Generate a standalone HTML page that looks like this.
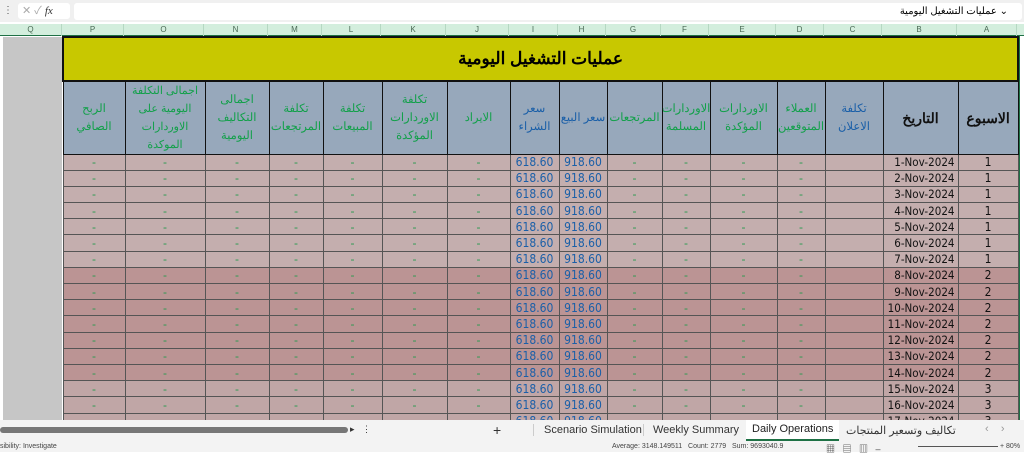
<!DOCTYPE html><html><head><meta charset="utf-8"><style>
*{margin:0;padding:0;box-sizing:border-box}
body{width:1024px;height:452px;overflow:hidden;background:#fff;font-family:"Liberation Sans","Noto Sans CJK SC",sans-serif;position:relative}
.a{position:absolute}
#fb{left:0;top:0;width:1024px;height:22px;background:#f0f0f0}
#ch{left:0;top:24px;width:1024px;height:12px;background:#d3eedd;border-bottom:1px solid #1e7145}
.cl{position:absolute;top:0;height:12px;font-size:8px;color:#4a6a55;text-align:center;line-height:12px;border-right:1px solid #b5d8c2}
#q{left:3px;top:37px;width:59px;height:383px;background:#c6c6c6}
table{position:absolute;left:62px;top:36px;width:955px;border-collapse:collapse;table-layout:fixed;direction:ltr}
td{border:1px solid #222;font-family:"Liberation Sans","Noto Sans CJK SC",sans-serif;overflow:hidden;white-space:nowrap;padding:0}
.t td{background:#c8c800;height:44px;font-size:17px;text-align:center;font-weight:bold;border:2px solid #111}
.h td{background:#97a8bb;height:73px;font-size:11.5px;text-align:center;color:#12a04a;white-space:normal;border:1.5px solid #111}
.h td div{height:71px;overflow:hidden;display:flex;align-items:center;justify-content:center;line-height:18px}
.h td.b{color:#1a5fa8}.h td.k{color:#111;font-size:14px;font-weight:bold}
.r td{height:16.2px;font-size:12px;line-height:14px;text-align:center;color:#2a9a50;border-color:#555}
.w1 td{background:#c4aeae}.w2 td{background:#bb9494}.w3 td{background:#c0a6a6}
.r td.n{color:#1a5fa8;font-family:"DejaVu Sans Condensed","Liberation Sans",sans-serif;font-size:12px}
.r td.d{color:#111;text-align:right;padding-right:3px;font-family:"DejaVu Sans Condensed","Liberation Sans",sans-serif;font-size:11.5px}
.r td.wk{color:#111;font-family:"DejaVu Sans Condensed",sans-serif;font-size:12px}
#tabs{left:0;top:420px;width:1024px;height:21px;background:#f3f3f3;font-size:11px;color:#333}
#st{left:0;top:441px;width:1024px;height:11px;background:#f3f3f3;font-size:7px;color:#444}
</style></head><body>
<div class="a" id="fb">
<div class="a" style="left:3px;top:5px;width:4px;height:12px;font-size:10px;color:#555">⋮</div>
<div class="a" style="left:18px;top:3px;width:52px;height:16px;background:#fff;border-radius:3px;font-size:11px;color:#aaa;padding-left:4px;line-height:16px">✕ ✓ <i style="color:#333;font-family:'Liberation Serif'">fx</i></div>
<div class="a" style="left:74px;top:3px;width:948px;height:17px;background:#fff;border-radius:3px;font-size:10px;direction:rtl;padding-right:14px;line-height:17px">⌄ عمليات التشغيل اليومية</div>
</div>
<div class="a" id="ch">
<div class="cl" style="left:0;width:62px">Q</div><div class="cl" style="left:62px;width:62px">P</div><div class="cl" style="left:124px;width:80px">O</div><div class="cl" style="left:204px;width:64px">N</div><div class="cl" style="left:268px;width:54px">M</div><div class="cl" style="left:322px;width:59px">L</div><div class="cl" style="left:381px;width:65px">K</div><div class="cl" style="left:446px;width:63px">J</div><div class="cl" style="left:509px;width:49px">I</div><div class="cl" style="left:558px;width:48px">H</div><div class="cl" style="left:606px;width:55px">G</div><div class="cl" style="left:661px;width:48px">F</div><div class="cl" style="left:709px;width:67px">E</div><div class="cl" style="left:776px;width:48px">D</div><div class="cl" style="left:824px;width:58px">C</div><div class="cl" style="left:882px;width:75px">B</div><div class="cl" style="left:957px;width:60px">A</div>
</div>
<div class="a" id="q"></div>
<table>
<colgroup><col style="width:62px"><col style="width:80px"><col style="width:64px"><col style="width:54px"><col style="width:59px"><col style="width:65px"><col style="width:63px"><col style="width:49px"><col style="width:48px"><col style="width:55px"><col style="width:48px"><col style="width:67px"><col style="width:48px"><col style="width:58px"><col style="width:75px"><col style="width:60px"></colgroup>
<tr class="t"><td colspan="16">عمليات التشغيل اليومية</td></tr>
<tr class="h"><td><div>الربح الصافي</div></td><td><div style="font-size:11px">اجمالى التكلفة اليومية على الاوردارات الموكدة</div></td><td><div>اجمالى التكاليف اليومية</div></td><td><div>تكلفة المرتجعات</div></td><td><div>تكلفة المبيعات</div></td><td><div>تكلفة الاوردارات المؤكدة</div></td><td><div>الايراد</div></td><td class="b"><div>سعر الشراء</div></td><td class="b"><div>سعر البيع</div></td><td><div>المرتجعات</div></td><td><div>الاوردارات المسلمة</div></td><td><div>الاوردارات المؤكدة</div></td><td><div>العملاء المتوقعين</div></td><td class="b"><div>تكلفة الاعلان</div></td><td class="k"><div>التاريخ</div></td><td class="k"><div>الاسبوع</div></td></tr>
<tr class="r w1"><td>-</td><td>-</td><td>-</td><td>-</td><td>-</td><td>-</td><td>-</td><td class="n">618.60</td><td class="n">918.60</td><td>-</td><td>-</td><td>-</td><td>-</td><td></td><td class="d">1-Nov-2024</td><td class="wk">1</td></tr>
<tr class="r w1"><td>-</td><td>-</td><td>-</td><td>-</td><td>-</td><td>-</td><td>-</td><td class="n">618.60</td><td class="n">918.60</td><td>-</td><td>-</td><td>-</td><td>-</td><td></td><td class="d">2-Nov-2024</td><td class="wk">1</td></tr>
<tr class="r w1"><td>-</td><td>-</td><td>-</td><td>-</td><td>-</td><td>-</td><td>-</td><td class="n">618.60</td><td class="n">918.60</td><td>-</td><td>-</td><td>-</td><td>-</td><td></td><td class="d">3-Nov-2024</td><td class="wk">1</td></tr>
<tr class="r w1"><td>-</td><td>-</td><td>-</td><td>-</td><td>-</td><td>-</td><td>-</td><td class="n">618.60</td><td class="n">918.60</td><td>-</td><td>-</td><td>-</td><td>-</td><td></td><td class="d">4-Nov-2024</td><td class="wk">1</td></tr>
<tr class="r w1"><td>-</td><td>-</td><td>-</td><td>-</td><td>-</td><td>-</td><td>-</td><td class="n">618.60</td><td class="n">918.60</td><td>-</td><td>-</td><td>-</td><td>-</td><td></td><td class="d">5-Nov-2024</td><td class="wk">1</td></tr>
<tr class="r w1"><td>-</td><td>-</td><td>-</td><td>-</td><td>-</td><td>-</td><td>-</td><td class="n">618.60</td><td class="n">918.60</td><td>-</td><td>-</td><td>-</td><td>-</td><td></td><td class="d">6-Nov-2024</td><td class="wk">1</td></tr>
<tr class="r w1"><td>-</td><td>-</td><td>-</td><td>-</td><td>-</td><td>-</td><td>-</td><td class="n">618.60</td><td class="n">918.60</td><td>-</td><td>-</td><td>-</td><td>-</td><td></td><td class="d">7-Nov-2024</td><td class="wk">1</td></tr>
<tr class="r w2"><td>-</td><td>-</td><td>-</td><td>-</td><td>-</td><td>-</td><td>-</td><td class="n">618.60</td><td class="n">918.60</td><td>-</td><td>-</td><td>-</td><td>-</td><td></td><td class="d">8-Nov-2024</td><td class="wk">2</td></tr>
<tr class="r w2"><td>-</td><td>-</td><td>-</td><td>-</td><td>-</td><td>-</td><td>-</td><td class="n">618.60</td><td class="n">918.60</td><td>-</td><td>-</td><td>-</td><td>-</td><td></td><td class="d">9-Nov-2024</td><td class="wk">2</td></tr>
<tr class="r w2"><td>-</td><td>-</td><td>-</td><td>-</td><td>-</td><td>-</td><td>-</td><td class="n">618.60</td><td class="n">918.60</td><td>-</td><td>-</td><td>-</td><td>-</td><td></td><td class="d">10-Nov-2024</td><td class="wk">2</td></tr>
<tr class="r w2"><td>-</td><td>-</td><td>-</td><td>-</td><td>-</td><td>-</td><td>-</td><td class="n">618.60</td><td class="n">918.60</td><td>-</td><td>-</td><td>-</td><td>-</td><td></td><td class="d">11-Nov-2024</td><td class="wk">2</td></tr>
<tr class="r w2"><td>-</td><td>-</td><td>-</td><td>-</td><td>-</td><td>-</td><td>-</td><td class="n">618.60</td><td class="n">918.60</td><td>-</td><td>-</td><td>-</td><td>-</td><td></td><td class="d">12-Nov-2024</td><td class="wk">2</td></tr>
<tr class="r w2"><td>-</td><td>-</td><td>-</td><td>-</td><td>-</td><td>-</td><td>-</td><td class="n">618.60</td><td class="n">918.60</td><td>-</td><td>-</td><td>-</td><td>-</td><td></td><td class="d">13-Nov-2024</td><td class="wk">2</td></tr>
<tr class="r w2"><td>-</td><td>-</td><td>-</td><td>-</td><td>-</td><td>-</td><td>-</td><td class="n">618.60</td><td class="n">918.60</td><td>-</td><td>-</td><td>-</td><td>-</td><td></td><td class="d">14-Nov-2024</td><td class="wk">2</td></tr>
<tr class="r w3"><td>-</td><td>-</td><td>-</td><td>-</td><td>-</td><td>-</td><td>-</td><td class="n">618.60</td><td class="n">918.60</td><td>-</td><td>-</td><td>-</td><td>-</td><td></td><td class="d">15-Nov-2024</td><td class="wk">3</td></tr>
<tr class="r w3"><td>-</td><td>-</td><td>-</td><td>-</td><td>-</td><td>-</td><td>-</td><td class="n">618.60</td><td class="n">918.60</td><td>-</td><td>-</td><td>-</td><td>-</td><td></td><td class="d">16-Nov-2024</td><td class="wk">3</td></tr>
<tr class="r w3"><td>-</td><td>-</td><td>-</td><td>-</td><td>-</td><td>-</td><td>-</td><td class="n">618.60</td><td class="n">918.60</td><td>-</td><td>-</td><td>-</td><td>-</td><td></td><td class="d">17-Nov-2024</td><td class="wk">3</td></tr>
</table>
<div class="a" style="left:1019px;top:36px;width:5px;height:384px;background:#fff;border-left:1px solid #1e7145"></div>
<div class="a" id="tabs">
<div class="a" style="left:0;top:7px;width:348px;height:6px;background:#777;border-radius:3px"></div>
<div class="a" style="left:350px;top:4px;font-size:9px">▸ &nbsp;&nbsp;⋮</div>
<div class="a" style="left:493px;top:2px;font-size:14px">+</div>
<div class="a" style="left:533px;top:4px;border-left:1px solid #ccc;padding-left:10px">Scenario Simulation</div>
<div class="a" style="left:643px;top:4px;border-left:1px solid #ccc;padding-left:9px">Weekly Summary</div>
<div class="a" style="left:746px;top:0;height:21px;background:#fff;padding:3px 6px 0;color:#222;border-bottom:2px solid #1e7145">Daily Operations</div>
<div class="a" style="left:846px;top:4px;font-size:11px">تكاليف وتسعير المنتجات</div>
<div class="a" style="left:985px;top:3px;color:#999">‹ &nbsp;&nbsp; ›</div>
</div>
<div class="a" id="st">
<div class="a" style="left:0;top:2px">sibility: Investigate</div>
<div class="a" style="left:612px;top:2px">Average: 3148.149511 &nbsp;&nbsp;Count: 2779 &nbsp;&nbsp;Sum: 9693040.9</div>
<div class="a" style="left:826px;top:1px;font-size:9px">▦ &nbsp;&nbsp;▤ &nbsp;&nbsp;▥ &nbsp;&nbsp;–</div>
<div class="a" style="left:918px;top:5px;width:80px;height:1px;background:#555"></div>
<div class="a" style="left:1000px;top:2px">+ 80%</div>
</div>
</body></html>
